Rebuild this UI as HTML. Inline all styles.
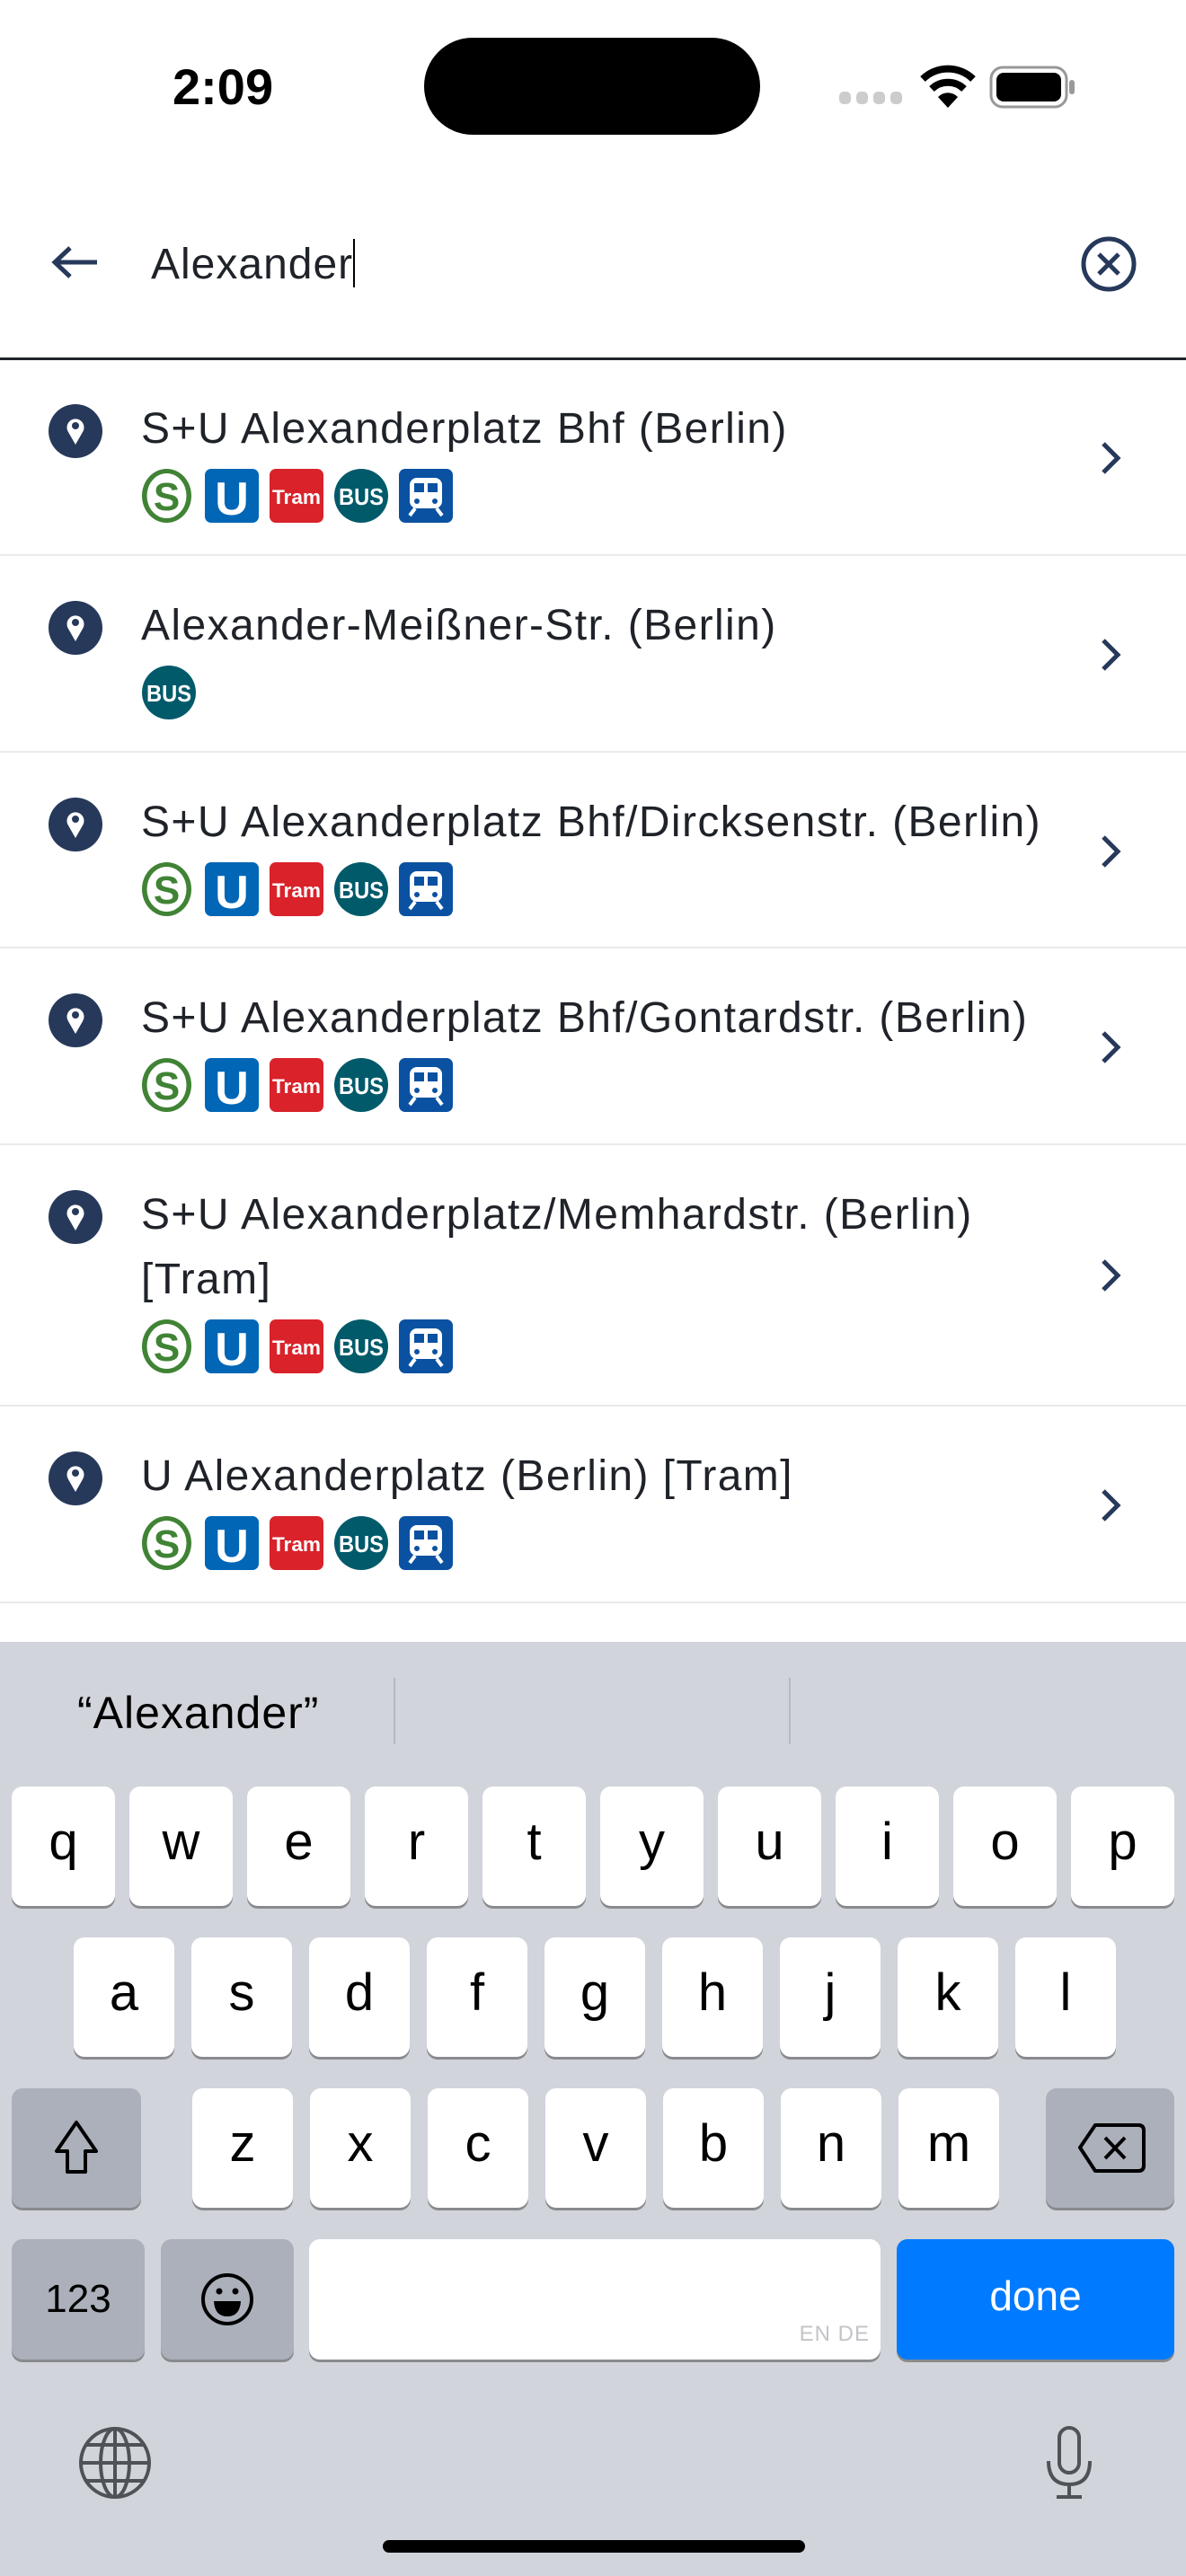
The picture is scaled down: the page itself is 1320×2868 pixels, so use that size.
<!DOCTYPE html>
<html><head><meta charset="utf-8"><style>
*{margin:0;padding:0;box-sizing:border-box}
body{width:1320px;height:2868px;position:relative;background:#fff;font-family:"Liberation Sans",sans-serif;overflow:hidden;color:#1f2329}
.a{position:absolute}
.title{position:absolute;left:157px;font-size:48px;letter-spacing:1.4px;line-height:1;white-space:nowrap;color:#1f2329}
.sep{position:absolute;left:0;width:1320px;height:2px;background:#e8eaed}
.pin{position:absolute;left:54px;width:60px;height:60px}
.chev{position:absolute;left:1222px;width:28px;height:40px}
.icons{position:absolute;left:158px;height:60px}
.kb{position:absolute;left:0;top:1828px;width:1320px;height:1040px;background:#d1d4db}
.key{position:absolute;background:#fff;border-radius:12px;box-shadow:0 3px 0 #898a8d;font-size:58px;text-align:center;color:#000}
.key.g{background:#abb0ba}
</style></head><body>

<div class="a" style="left:192px;top:64px;font-size:56px;font-weight:bold;color:#000">2:09</div>
<div class="a" style="left:472px;top:42px;width:374px;height:108px;background:#000;border-radius:54px"></div>
<svg class="a" style="left:934px;top:100px" width="72" height="18"><rect x="0" y="2" width="13" height="14" rx="5" fill="#ccc"/><rect x="19" y="2" width="13" height="14" rx="5" fill="#ccc"/><rect x="38" y="2" width="13" height="14" rx="5" fill="#ccc"/><rect x="57" y="2" width="13" height="14" rx="5" fill="#ccc"/></svg>
<svg class="a" style="left:1024px;top:72px" width="62" height="50" viewBox="0 0 62 50"><path d="M3 16 A40 40 0 0 1 59 16" stroke="#000" stroke-width="8" fill="none"/><path d="M13 27 A26 26 0 0 1 49 27" stroke="#000" stroke-width="8" fill="none"/><path d="M31 48 L20 36 A15 15 0 0 1 42 36 Z" fill="#000"/></svg>
<svg class="a" style="left:1100px;top:72px" width="100" height="50"><rect x="3" y="3" width="84" height="44" rx="13" fill="none" stroke="#999" stroke-width="3"/><rect x="9" y="9" width="72" height="32" rx="8" fill="#000"/><rect x="90" y="17" width="6" height="16" rx="3" fill="#999"/></svg>

<svg class="a" style="left:56px;top:272px" width="56" height="40" viewBox="0 0 56 40"><path d="M52 20 H6 M22 4 L5 20 L22 36" stroke="#27395a" stroke-width="5" fill="none"/></svg>
<div class="a" style="left:168px;top:266px;font-size:48px;letter-spacing:1px;color:#1f2329">Alexander<span style="display:inline-block;width:2px;height:54px;background:#000;vertical-align:-10px"></span></div>
<svg class="a" style="left:1202px;top:262px" width="64" height="64" viewBox="0 0 64 64"><circle cx="32" cy="32" r="28" fill="none" stroke="#27395a" stroke-width="5"/><path d="M21 21 L43 43 M43 21 L21 43" stroke="#27395a" stroke-width="5"/></svg>
<div class="a" style="left:0;top:398px;width:1320px;height:3px;background:#1f2329"></div>

<svg width="0" height="0" style="position:absolute"><defs>
<g id="pinI"><circle cx="30" cy="30" r="30" fill="#27395a"/><path d="M30 45 L22 31 A9.5 9.5 0 1 1 38 31 Z" fill="#fff"/><circle cx="30" cy="24" r="4" fill="#27395a"/></g>
<g id="chevI"><path d="M6 4 L22 20 L6 36" stroke="#27395a" stroke-width="5" fill="none"/></g>
<g id="sI"><ellipse cx="27.5" cy="30" rx="27.5" ry="30" fill="#408335"/><ellipse cx="27.5" cy="30" rx="22" ry="25" fill="#fff"/><text x="27.5" y="46" font-family="Liberation Sans" font-weight="bold" font-size="44" fill="#408335" text-anchor="middle">S</text></g>
<g id="uI"><rect width="60" height="60" rx="7" fill="#0166b6"/><text x="30" y="51" font-family="Liberation Sans" font-weight="bold" font-size="52" fill="#fff" text-anchor="middle">U</text></g>
<g id="tI"><rect width="60" height="60" rx="7" fill="#d9222a"/><text x="30" y="39" font-family="Liberation Sans" font-weight="bold" font-size="22" fill="#fff" text-anchor="middle" textLength="54" lengthAdjust="spacingAndGlyphs">Tram</text></g>
<g id="bI"><ellipse cx="30" cy="30" rx="30" ry="30" fill="#005a6a"/><text x="30" y="40" font-family="Liberation Sans" font-weight="bold" font-size="26" fill="#fff" text-anchor="middle" textLength="50" lengthAdjust="spacingAndGlyphs">BUS</text></g>
<g id="rI"><rect width="60" height="60" rx="7" fill="#0a51a1"/><rect x="12" y="10" width="36" height="34" rx="8" fill="#fff"/><rect x="17" y="16" width="11" height="10" fill="#0a51a1"/><rect x="32" y="16" width="11" height="10" fill="#0a51a1"/><circle cx="20" cy="36" r="3" fill="#0a51a1"/><circle cx="40" cy="36" r="3" fill="#0a51a1"/><path d="M18 44 L12 52 M42 44 L48 52" stroke="#fff" stroke-width="4"/></g>
</defs></svg>

<svg class="pin" style="top:450px"><use href="#pinI"/></svg>
<div class="title" style="top:454px">S+U Alexanderplatz Bhf (Berlin)</div>
<svg class="icons" style="top:522px" width="350" height="60"><use href="#sI"/><use href="#uI" x="70"/><use href="#tI" x="142"/><use href="#bI" x="214"/><use href="#rI" x="286"/></svg>
<svg class="chev" style="top:490px"><use href="#chevI"/></svg>
<div class="sep" style="top:617px"></div>

<svg class="pin" style="top:669px"><use href="#pinI"/></svg>
<div class="title" style="top:673px">Alexander-Meißner-Str. (Berlin)</div>
<svg class="icons" style="top:741px" width="62" height="60"><use href="#bI"/></svg>
<svg class="chev" style="top:709px"><use href="#chevI"/></svg>
<div class="sep" style="top:836px"></div>

<svg class="pin" style="top:888px"><use href="#pinI"/></svg>
<div class="title" style="top:892px">S+U Alexanderplatz Bhf/Dircksenstr. (Berlin)</div>
<svg class="icons" style="top:960px" width="350" height="60"><use href="#sI"/><use href="#uI" x="70"/><use href="#tI" x="142"/><use href="#bI" x="214"/><use href="#rI" x="286"/></svg>
<svg class="chev" style="top:928px"><use href="#chevI"/></svg>
<div class="sep" style="top:1054px"></div>

<svg class="pin" style="top:1106px"><use href="#pinI"/></svg>
<div class="title" style="top:1110px">S+U Alexanderplatz Bhf/Gontardstr. (Berlin)</div>
<svg class="icons" style="top:1178px" width="350" height="60"><use href="#sI"/><use href="#uI" x="70"/><use href="#tI" x="142"/><use href="#bI" x="214"/><use href="#rI" x="286"/></svg>
<svg class="chev" style="top:1146px"><use href="#chevI"/></svg>
<div class="sep" style="top:1273px"></div>

<svg class="pin" style="top:1325px"><use href="#pinI"/></svg>
<div class="title" style="top:1329px">S+U Alexanderplatz/Memhardstr. (Berlin)</div>
<div class="title" style="top:1401px">[Tram]</div>
<svg class="icons" style="top:1469px" width="350" height="60"><use href="#sI"/><use href="#uI" x="70"/><use href="#tI" x="142"/><use href="#bI" x="214"/><use href="#rI" x="286"/></svg>
<svg class="chev" style="top:1400px"><use href="#chevI"/></svg>
<div class="sep" style="top:1564px"></div>

<svg class="pin" style="top:1616px"><use href="#pinI"/></svg>
<div class="title" style="top:1620px">U Alexanderplatz (Berlin) [Tram]</div>
<svg class="icons" style="top:1688px" width="350" height="60"><use href="#sI"/><use href="#uI" x="70"/><use href="#tI" x="142"/><use href="#bI" x="214"/><use href="#rI" x="286"/></svg>
<svg class="chev" style="top:1656px"><use href="#chevI"/></svg>
<div class="sep" style="top:1783px"></div>

<div class="kb">
<div class="a" style="left:86px;top:50px;font-size:50px;letter-spacing:1px;color:#000">“Alexander”</div>
<div class="a" style="left:438px;top:40px;width:2px;height:74px;background:#b5b8bf"></div>
<div class="a" style="left:878px;top:40px;width:2px;height:74px;background:#b5b8bf"></div>

<div class="key" style="left:13px;top:161px;width:115px;height:133px;line-height:124px">q</div>
<div class="key" style="left:144px;top:161px;width:115px;height:133px;line-height:124px">w</div>
<div class="key" style="left:275px;top:161px;width:115px;height:133px;line-height:124px">e</div>
<div class="key" style="left:406px;top:161px;width:115px;height:133px;line-height:124px">r</div>
<div class="key" style="left:537px;top:161px;width:115px;height:133px;line-height:124px">t</div>
<div class="key" style="left:668px;top:161px;width:115px;height:133px;line-height:124px">y</div>
<div class="key" style="left:799px;top:161px;width:115px;height:133px;line-height:124px">u</div>
<div class="key" style="left:930px;top:161px;width:115px;height:133px;line-height:124px">i</div>
<div class="key" style="left:1061px;top:161px;width:115px;height:133px;line-height:124px">o</div>
<div class="key" style="left:1192px;top:161px;width:115px;height:133px;line-height:124px">p</div>

<div class="key" style="left:82px;top:329px;width:112px;height:133px;line-height:124px">a</div>
<div class="key" style="left:213px;top:329px;width:112px;height:133px;line-height:124px">s</div>
<div class="key" style="left:344px;top:329px;width:112px;height:133px;line-height:124px">d</div>
<div class="key" style="left:475px;top:329px;width:112px;height:133px;line-height:124px">f</div>
<div class="key" style="left:606px;top:329px;width:112px;height:133px;line-height:124px">g</div>
<div class="key" style="left:737px;top:329px;width:112px;height:133px;line-height:124px">h</div>
<div class="key" style="left:868px;top:329px;width:112px;height:133px;line-height:124px">j</div>
<div class="key" style="left:999px;top:329px;width:112px;height:133px;line-height:124px">k</div>
<div class="key" style="left:1130px;top:329px;width:112px;height:133px;line-height:124px">l</div>

<div class="key g" style="left:13px;top:497px;width:144px;height:133px"><svg width="144" height="133" viewBox="0 0 144 133"><path d="M72 38 L50 70 H62 V93 H82 V70 H94 Z" fill="none" stroke="#000" stroke-width="4" stroke-linejoin="round"/></svg></div>
<div class="key" style="left:214px;top:497px;width:112px;height:133px;line-height:124px">z</div>
<div class="key" style="left:345px;top:497px;width:112px;height:133px;line-height:124px">x</div>
<div class="key" style="left:476px;top:497px;width:112px;height:133px;line-height:124px">c</div>
<div class="key" style="left:607px;top:497px;width:112px;height:133px;line-height:124px">v</div>
<div class="key" style="left:738px;top:497px;width:112px;height:133px;line-height:124px">b</div>
<div class="key" style="left:869px;top:497px;width:112px;height:133px;line-height:124px">n</div>
<div class="key" style="left:1000px;top:497px;width:112px;height:133px;line-height:124px">m</div>
<div class="key g" style="left:1164px;top:497px;width:143px;height:133px"><svg width="143" height="133" viewBox="0 0 143 133"><path d="M55 41 H103 Q109 41 109 47 V86 Q109 92 103 92 H55 L38 66 Z" fill="none" stroke="#000" stroke-width="4" stroke-linejoin="round"/><path d="M66 55 L88 78 M88 55 L66 78" stroke="#000" stroke-width="4"/></svg></div>

<div class="key g" style="left:13px;top:665px;width:148px;height:134px;line-height:134px;font-size:44px">123</div>
<div class="key g" style="left:179px;top:665px;width:148px;height:134px"><svg width="148" height="134" viewBox="0 0 148 134"><circle cx="74" cy="67" r="27" fill="none" stroke="#000" stroke-width="4"/><circle cx="65" cy="58" r="3.5"/><circle cx="83" cy="58" r="3.5"/><path d="M59 69 H89 Q88 86 74 86 Q60 86 59 69 Z"/></svg></div>
<div class="key" style="left:344px;top:665px;width:636px;height:134px"><span style="position:absolute;right:12px;bottom:14px;font-size:24px;color:#c2c4c8;letter-spacing:1px">EN DE</span></div>
<div class="key" style="left:998px;top:665px;width:309px;height:134px;line-height:126px;background:#007aff;color:#fff;font-size:46px">done</div>

<svg class="a" style="left:86px;top:872px" width="84" height="84" viewBox="0 0 84 84"><g fill="none" stroke="#4f5257" stroke-width="4"><circle cx="42" cy="42" r="38"/><ellipse cx="42" cy="42" rx="16" ry="38"/><path d="M42 4 V80 M4 42 H80 M10 22 H74 M10 62 H74"/></g></svg>
<svg class="a" style="left:1160px;top:872px" width="60" height="84" viewBox="0 0 60 84"><g fill="none" stroke="#4f5257" stroke-width="4"><rect x="19" y="3" width="22" height="50" rx="11"/><path d="M7 40 Q7 66 30 66 Q53 66 53 40 M30 66 V80 M16 80 H44"/></g></svg>
<div class="a" style="left:426px;top:1000px;width:470px;height:14px;background:#000;border-radius:7px"></div>
</div>
</body></html>
